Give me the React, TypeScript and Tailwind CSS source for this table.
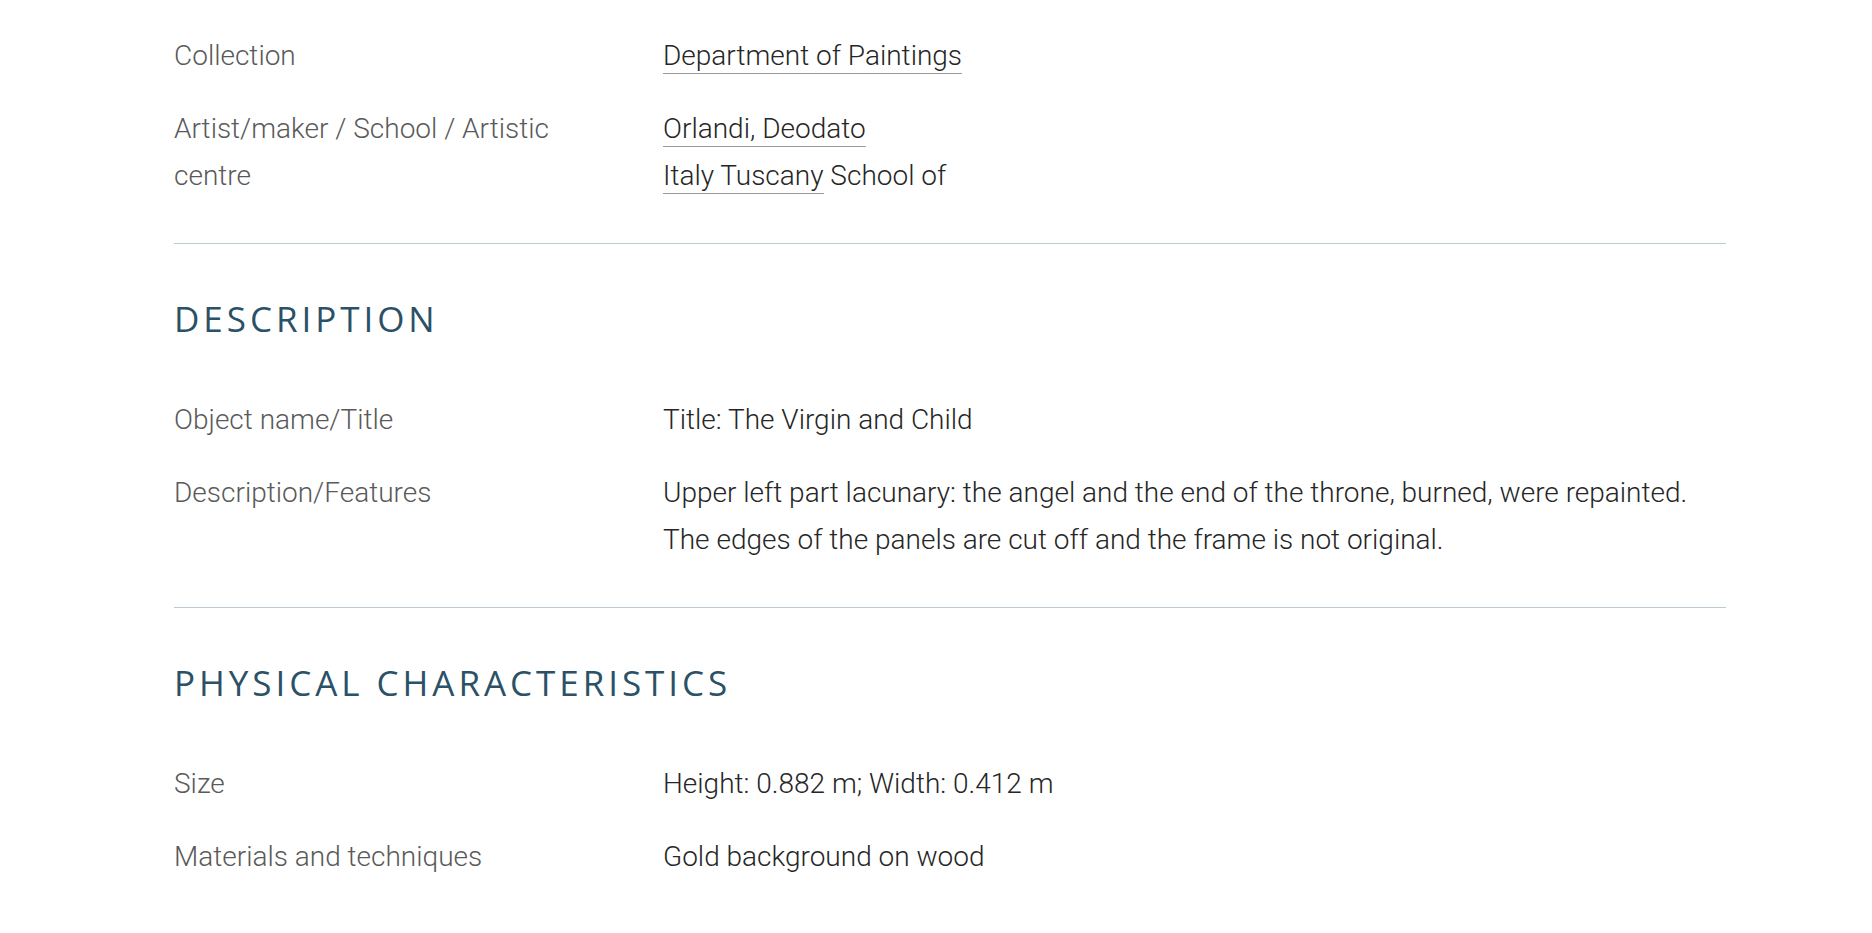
const rows1 = [
  {
    label: "Collection",
    value: (
      <a className="border-b border-[#9b9b9b] pb-[1px]">Department of Paintings</a>
    ),
  },
  {
    label: "Artist/maker / School / Artistic centre",
    value: (
      <>
        <div>
          <a className="border-b border-[#9b9b9b] pb-[1px]">Orlandi, Deodato</a>
        </div>
        <div>
          <a className="border-b border-[#9b9b9b] pb-[1px]">Italy Tuscany</a> School of
        </div>
      </>
    ),
  },
];

const rows2 = [
  { label: "Object name/Title", value: "Title: The Virgin and Child" },
  {
    label: "Description/Features",
    value:
      "Upper left part lacunary: the angel and the end of the throne, burned, were repainted. The edges of the panels are cut off and the frame is not original.",
  },
];

const rows3 = [
  { label: "Size", value: "Height: 0.882 m; Width: 0.412 m" },
  { label: "Materials and techniques", value: "Gold background on wood" },
];

function Row({ label, value }: { label: string; value: React.ReactNode }) {
  return (
    <div className="flex">
      <div className="w-[489px] shrink-0 pr-[90px] text-[#5a5a5a]">{label}</div>
      <div className="flex-1 pr-[10px] text-[#262626]">{value}</div>
    </div>
  );
}

function Heading({ children }: { children: string }) {
  return (
    <h2
      className="pt-[55px] pb-[57px] text-[35px] leading-[40px] font-normal tracking-[0.113em] text-[#2b5166]"
      style={{ fontFamily: '"Open Sans", sans-serif' }}
    >
      {children}
    </h2>
  );
}

export default function App() {
  return (
    <div
      className="min-h-screen bg-white font-light text-[28px] leading-[47.5px]"
      style={{ fontFamily: "Roboto, sans-serif" }}
    >
      <div className="ml-[174px] w-[1552px]">
        <div className="pt-[32px] pb-[43px] flex flex-col gap-[25px] border-b border-[#bccbd1]">
          {rows1.map((r, i) => (
            <Row key={i} label={r.label} value={r.value} />
          ))}
        </div>
        <Heading>DESCRIPTION</Heading>
        <div className="pb-[43px] flex flex-col gap-[25.5px] border-b border-[#bccbd1]">
          {rows2.map((r, i) => (
            <Row key={i} label={r.label} value={r.value} />
          ))}
        </div>
        <Heading>PHYSICAL CHARACTERISTICS</Heading>
        <div className="pb-[44px] flex flex-col gap-[26px]">
          {rows3.map((r, i) => (
            <Row key={i} label={r.label} value={r.value} />
          ))}
        </div>
      </div>
    </div>
  );
}
